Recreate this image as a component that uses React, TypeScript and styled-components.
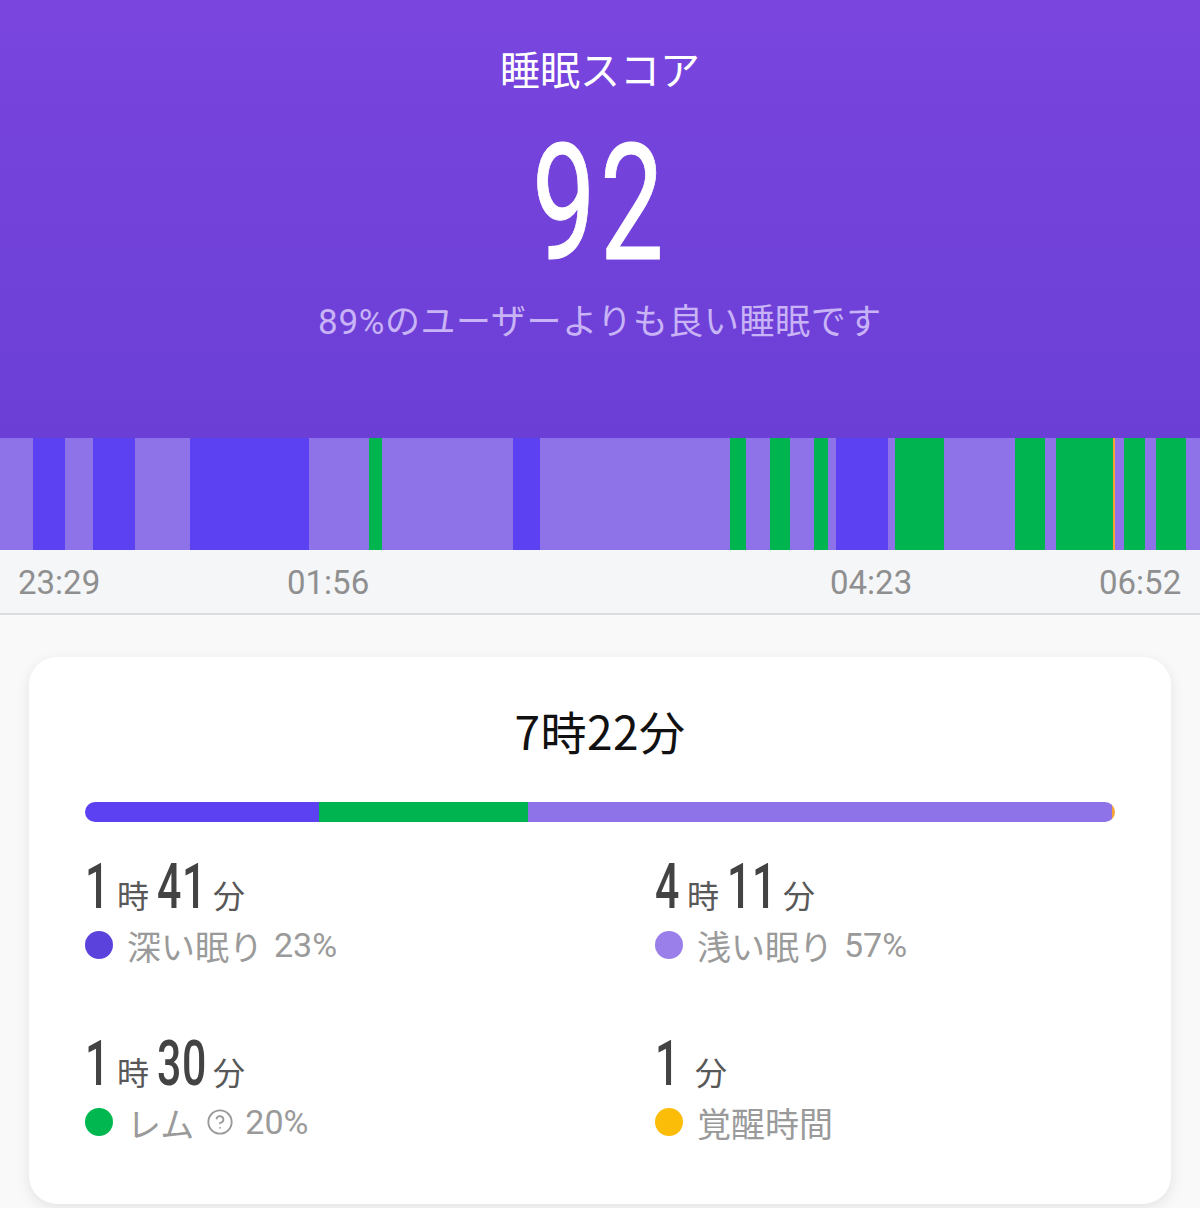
import React from "react";
import styled, { createGlobalStyle } from "styled-components";

const GlobalStyle = createGlobalStyle`
  html, body { margin: 0; padding: 0; background: #f9f9f9; }
  body { font-family: Roboto, "Noto Sans CJK JP", sans-serif; -webkit-font-smoothing: antialiased; }
  * { box-sizing: border-box; }
`;

type Stage = "deep" | "light" | "rem" | "awake";

const STAGE_COLORS: Record<Stage, string> = {
  deep: "#5c41f2",
  light: "#8e73e8",
  rem: "#00b54f",
  awake: "#f2a236",
};

// Hypnogram blocks: [stage, width in px on a 1200px-wide timeline]
const hypnogram: [Stage, number][] = [
  ["light", 33], ["deep", 32], ["light", 28], ["deep", 42], ["light", 55],
  ["deep", 119], ["light", 60], ["rem", 13], ["light", 131], ["deep", 27],
  ["light", 190], ["rem", 16], ["light", 24], ["rem", 20], ["light", 24],
  ["rem", 14], ["light", 8], ["deep", 52], ["light", 7], ["rem", 49],
  ["light", 71], ["rem", 30], ["light", 11], ["rem", 57], ["awake", 2],
  ["light", 9], ["rem", 21], ["light", 11], ["rem", 30], ["light", 14],
];

const ticks = [
  { label: "23:29", left: 18 },
  { label: "01:56", left: 287 },
  { label: "04:23", left: 830 },
  { label: "06:52", left: 1099 },
];

const Page = styled.div`
  width: 1200px;
  min-height: 1208px;
  background: #f9f9f9;
  overflow: hidden;
`;

const Header = styled.header`
  height: 438px;
  padding-top: 44px;
  background: linear-gradient(180deg, #7945de 0%, #6b3fd6 100%);
  display: flex;
  flex-direction: column;
  align-items: center;
`;

const Title = styled.h1`
  margin: 0;
  font-family: "Noto Sans CJK JP", sans-serif;
  font-weight: 400;
  font-size: 40px;
  line-height: 48px;
  color: #ffffff;
`;

const Score = styled.div`
  margin-top: 31px;
  font-family: Roboto, sans-serif;
  font-weight: 400;
  font-size: 162px;
  line-height: 162px;
  height: 162px;
  color: #ffffff;
  transform: scaleX(0.7);
  letter-spacing: 6px;
  -webkit-text-stroke: 1px #ffffff;
`;

const Subtitle = styled.p`
  margin: 17px 0 0;
  font-family: Roboto, "Noto Sans CJK JP", sans-serif;
  font-size: 35px;
  line-height: 41px;
  color: #c7b3f6;
  letter-spacing: 0.6px;
`;

const Hypnogram = styled.div`
  display: flex;
  height: 112px;
`;

const Block = styled.div<{ $stage: Stage }>`
  background: ${(p) => STAGE_COLORS[p.$stage]};
  height: 100%;
`;

const Axis = styled.div`
  position: relative;
  height: 65px;
  background: #f5f6f8;
  border-bottom: 2px solid #dddddd;
`;

const Tick = styled.span`
  position: absolute;
  top: 14px;
  font-family: Roboto, sans-serif;
  font-size: 33px;
  line-height: 38px;
  color: #8f8f8f;
`;

const Card = styled.section`
  margin: 42px 29px 0;
  background: #ffffff;
  border-radius: 28px;
  box-shadow: 0 4px 14px rgba(0, 0, 0, 0.09);
  padding: 46px 56px 62px;
  display: flex;
  flex-direction: column;
`;

const Total = styled.div`
  text-align: center;
  font-family: "Noto Sans CJK JP", sans-serif;
  font-size: 46px;
  line-height: 55px;
  color: #111111;
  letter-spacing: 0.5px;
`;

const StackBar = styled.div`
  margin-top: 44px;
  height: 20px;
  border-radius: 10px;
  overflow: hidden;
  display: flex;
`;

const StatsGrid = styled.div`
  margin-top: 33px;
  display: grid;
  grid-template-columns: 570px 1fr;
  row-gap: 67px;
`;

const Stat = styled.div`
  display: flex;
  flex-direction: column;
  gap: 7px;
`;

const Amount = styled.div`
  display: flex;
  align-items: baseline;
  height: 63px;
`;

const Digits = styled.span<{ $w: number }>`
  display: inline-block;
  width: ${(p) => p.$w}px;
  font-family: Roboto, sans-serif;
  font-weight: 500;
  font-size: 63px;
  line-height: 63px;
  color: #434343;
  transform: scaleX(0.68);
  transform-origin: left center;
  letter-spacing: 1px;
`;

const Unit = styled.span<{ $gap?: number }>`
  font-family: "Noto Sans CJK JP", sans-serif;
  font-size: 32px;
  color: #585858;
  margin-left: ${(p) => p.$gap ?? 7}px;
  margin-right: 8px;
`;

const Legend = styled.div`
  display: flex;
  align-items: center;
  height: 40px;
  font-family: Roboto, "Noto Sans CJK JP", sans-serif;
  font-size: 34px;
  color: #9a9a9a;
`;

const Dot = styled.span<{ $color: string }>`
  width: 28px;
  height: 28px;
  border-radius: 50%;
  background: ${(p) => p.$color};
  margin-right: 14px;
  flex: none;
`;

const Pct = styled.span`
  margin-left: 11px;
`;

const HelpIcon = styled.svg`
  margin-left: 12px;
  width: 28px;
  height: 28px;
`;

const digitWidth = (s: string) => Math.round(s.length * 24.5);

type Part = { value: string; unit: string; gap?: number };

function StatBlock({ parts, color, label, pct, help }: {
  parts: Part[]; color: string; label: string; pct?: string; help?: boolean;
}) {
  return (
    <Stat>
      <Amount>
        {parts.map((p, i) => (
          <React.Fragment key={i}>
            <Digits $w={digitWidth(p.value)}>{p.value}</Digits>
            <Unit $gap={p.gap}>{p.unit}</Unit>
          </React.Fragment>
        ))}
      </Amount>
      <Legend>
        <Dot $color={color} />
        <span>{label}</span>
        {help && (
          <HelpIcon viewBox="0 0 24 24" fill="none" stroke="#9a9a9a" strokeWidth={1.6} strokeLinecap="round" strokeLinejoin="round">
            <circle cx="12" cy="12" r="10" />
            <path d="M9.09 9a3 3 0 0 1 5.83 1c0 2-3 3-3 3" />
            <path d="M12 17h.01" />
          </HelpIcon>
        )}
        {pct && <Pct>{pct}</Pct>}
      </Legend>
    </Stat>
  );
}

export default function App() {
  const totals: [Stage, number][] = [["deep", 234], ["rem", 209], ["light", 584], ["awake", 3]];
  return (
    <Page>
      <GlobalStyle />
      <Header>
        <Title>睡眠スコア</Title>
        <Score>92</Score>
        <Subtitle>89%のユーザーよりも良い睡眠です</Subtitle>
      </Header>
      <Hypnogram>
        {hypnogram.map(([stage, w], i) => (
          <Block key={i} $stage={stage} style={{ flex: `${w} 0 0` }} />
        ))}
      </Hypnogram>
      <Axis>
        {ticks.map((t) => (
          <Tick key={t.label} style={{ left: t.left }}>{t.label}</Tick>
        ))}
      </Axis>
      <Card>
        <Total>7時22分</Total>
        <StackBar>
          {totals.map(([stage, w]) => (
            <Block key={stage} $stage={stage} style={{ flex: `${w} 0 0` }} />
          ))}
        </StackBar>
        <StatsGrid>
          <StatBlock
            parts={[{ value: "1", unit: "時" }, { value: "41", unit: "分" }]}
            color="#5b42dc"
            label="深い眠り"
            pct="23%"
          />
          <StatBlock
            parts={[{ value: "4", unit: "時" }, { value: "11", unit: "分" }]}
            color="#9a7fea"
            label="浅い眠り"
            pct="57%"
          />
          <StatBlock
            parts={[{ value: "1", unit: "時" }, { value: "30", unit: "分" }]}
            color="#00b84f"
            label="レム"
            pct="20%"
            help
          />
          <StatBlock
            parts={[{ value: "1", unit: "分", gap: 15 }]}
            color="#fbbd08"
            label="覚醒時間"
          />
        </StatsGrid>
      </Card>
    </Page>
  );
}
